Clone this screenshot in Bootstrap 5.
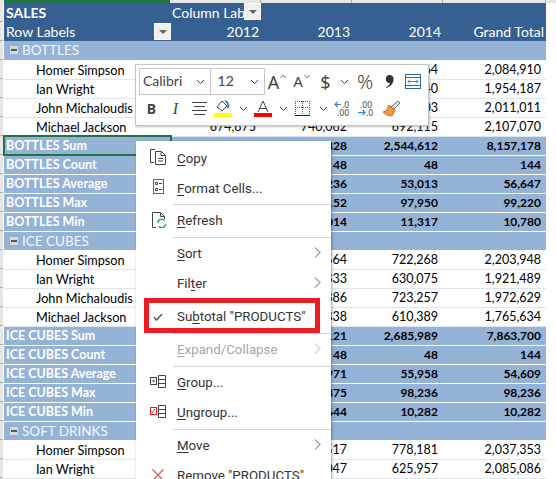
<!DOCTYPE html>
<html lang="en">
<head>
<meta charset="UTF-8">
<title>Pivot table context menu</title>
<link rel="stylesheet" href="https://cdn.jsdelivr.net/npm/bootstrap@5.3.2/dist/css/bootstrap.min.css">
<style>
body { width: 556px; height: 479px; overflow: hidden; background: #fff; font-family: Lato, "Liberation Sans", sans-serif; }
.sheet { position: relative; width: 556px; height: 479px; overflow: hidden; padding-left: 4px;
  background: repeating-linear-gradient(#ababab 0 1px, #e6e6e6 1px 19px) 0 2px / 3px 100% no-repeat; }
.top-strip { height: 3px; margin-left: -4px; background: #e6e6e6; display: flex; }
.top-strip i { display: block; height: 3px; border-right: 1px solid #ababab; }
.top-strip .gut { width: 4px; border: 0; }
.top-strip .col-a { width: 166px; background: #217346; border: 0; }
.top-strip .col-n { width: 91px; }
.top-strip .col-g { width: 103px; }
.pivot { width: 542px; table-layout: fixed; border-collapse: collapse; font-size: 13px; color: #000; }
.pivot col.a { width: 166px; }
.pivot col.n { width: 91px; }
.pivot td { height: 19px; padding: 0 5px 0 2px; line-height: 18px; text-align: right; white-space: nowrap; overflow: hidden; border-bottom: 1px solid #dce6f1; font-size: 12.5px; }
.pivot td:first-child { text-align: left; font-size: 12.7px; }
.hd td, .pivot .hd td:first-child { background: #366092; color: #fff; border: 0; font-size: 14px; padding-right: 2px; }
.hd td.lbl { text-align: left; }
.group td, .pivot .group td:first-child { background: #95b3d7; color: #f4f7fb; border-bottom: 1px solid #fff; font-size: 13.5px; }
.group td:first-child { padding-left: 6px; }
.box { display: inline-block; width: 8px; height: 8px; margin-right: 4px; background: #d9d9d9; position: relative; top: -1px; }
.box::after { content: ""; position: absolute; left: 1px; right: 1px; top: 3px; height: 2px; background: #555; }
.sub td { background: #95b3d7; font-weight: 700; border-bottom: 1px solid #fff; font-size: 12px; }
.pivot .sub td:first-child { color: #fff; font-size: 12.5px; }
.person td:first-child { padding-left: 32px; }
.drop { position: absolute; width: 17px; height: 17px; background: #f0f0f0; border: 1px solid #fff; }
.drop::after { content: ""; position: absolute; left: 4px; top: 6px; border: 4px solid transparent; border-top: 4px solid #666; }
.drop-col { left: 244px; top: 3px; }
.drop-row { left: 154px; top: 23px; }
.cell-frame { position: absolute; left: 3px; top: 135px; width: 169px; height: 21px; border: 2px solid #217346; }

.mini-bar { position: absolute; left: 135px; top: 64px; width: 294px; height: 62px; background: #fff; border: 1px solid #c6c6c6; box-shadow: 1px 1px 2px rgba(0,0,0,.25); padding: 3px; font-family: "Noto Sans", sans-serif; color: #444; }
.bar-line { height: 27px; }
.bar-line + .bar-line { margin-top: 1px; height: 25px; }
.combo { height: 27px; border: 1px solid #c6c6c6; padding-left: 3px; font-family: Lato, sans-serif; font-size: 14px; line-height: 24px; position: relative; color: #444; }
.combo-font { width: 72px; }
.combo-size { width: 55px; margin-left: -1px; }
.chev { position: absolute; right: 5px; top: 10px; }
.tb { display: flex; justify-content: center; align-items: center; flex: none; height: 25px; line-height: 1; }
.s15 { width: 15px; } .s16 { width: 16px; } .s18 { width: 18px; } .s22 { width: 22px; } .s23 { width: 23px; }
.s24 { width: 24px; } .s25 { width: 25px; } .s26 { width: 26px; }
.a-big { font-size: 18px; }
.a-small { font-size: 15px; }
.a-caret { margin: -10px 0 0 1px; }
.dollar { font-size: 18px; }
.pct { font-size: 20px; font-weight: 300; }
.bold-b { font-size: 14px; font-weight: 700; }
.ital-i { font-size: 16px; font-style: italic; font-family: "Liberation Serif", serif; }
svg text { font-family: "Noto Sans", sans-serif; font-size: 8.5px; fill: #444; }

.ctx-menu { position: absolute; left: 136px; top: 141px; width: 195px; height: 345px; background: #fff; box-shadow: 1px 1px 3px rgba(0,0,0,.35); font-family: Roboto, sans-serif; font-size: 13.3px; color: #333; }
.ctx-item { height: 30px; padding-left: 41px; position: relative; line-height: 30px; }
.ctx-item u { text-underline-offset: 2px; }
.ctx-first { height: 33px; line-height: 36px; }
.ctx-format { height: 29px; }
.ctx-after-gap { margin-top: 3px; }
.ic { position: absolute; }
.ic-copy { left: 14px; top: 8px; }
.ic-format { left: 17px; top: 5px; }
.ic-refresh { left: 16px; top: 6px; }
.ic-check { left: 17px; top: 11px; }
.ic-group { left: 14px; top: 7px; }
.ic-remove { left: 16px; top: 8px; }
.arrow { position: absolute; right: 10px; top: 8px; }
.ctx-sep { height: 1px; margin: 1px 0 1px 37px; background: #d4d4d4; }
.off { color: #a6a6a6; }
.red-box { position: absolute; left: 8px; top: 157px; width: 176px; height: 35px; border: 5px solid #ed1c24; }
</style>
</head>
<body>
<div class="sheet">
  <div class="top-strip"><i class="gut"></i><i class="col-a"></i><i class="col-n"></i><i class="col-n"></i><i class="col-n"></i><i class="col-g"></i></div>
  <table class="pivot">
    <colgroup><col class="a"><col class="n"><col class="n"><col class="n"><col></colgroup>
    <tbody id="rows"></tbody>
  </table>
  <span class="drop drop-col"></span>
  <span class="drop drop-row"></span>
  <div class="cell-frame"></div>

  <div class="mini-bar">
    <div class="bar-line d-flex align-items-center">
      <div class="combo combo-font">Calibri<svg class="chev" width="9" height="6" viewBox="0 0 9 6"><path d="M1 1l3.500 3.500L8 1" fill="none" stroke="#444"/></svg></div>
      <div class="combo combo-size">&nbsp;12<svg class="chev" width="9" height="6" viewBox="0 0 9 6"><path d="M1 1l3.500 3.500L8 1" fill="none" stroke="#444"/></svg></div>
      <span class="tb s24"><span class="a-big">A</span><svg class="a-caret" width="6" height="5" viewBox="0 0 6 5"><path d="M.5 4L3 1l2.500 3" fill="none" stroke="#2b88d8"/></svg></span>
      <span class="tb s25"><span class="a-small">A</span><svg class="a-caret" width="6" height="5" viewBox="0 0 6 5"><path d="M.5 1L3 4l2.500-3" fill="none" stroke="#2b88d8"/></svg></span>
      <span class="tb s23 dollar">$</span>
      <span class="tb s15"><svg width="9" height="6" viewBox="0 0 9 6"><path d="M1 1l3.500 3.500L8 1" fill="none" stroke="#444"/></svg></span>
      <span class="tb s26 pct">%</span>
      <span class="tb s22"><svg width="9" height="13" viewBox="0 0 9 13"><path d="M4.500 0a4 4 0 0 1 4 4.500C8.500 8.500 5 12 1.500 13l-.4-.8C3.500 11 5 9.500 5 8a3.500 3.500 0 0 1-1-.1A4 4 0 0 1 4.500 0z" fill="#333"/></svg></span>
      <span class="tb s25"><svg width="16" height="15" viewBox="0 0 16 15"><rect x=".5" y=".5" width="15" height="14" fill="none" stroke="#1f6fa8"/><path d="M.5 3.500h15M.5 11.500h15" stroke="#1f6fa8"/><path d="M3 7.500h10M5 5.500l-2 2 2 2M11 5.500l2 2-2 2" fill="none" stroke="#2b88d8"/></svg></span>
    </div>
    <div class="bar-line d-flex align-items-center">
      <span class="tb s25 bold-b">B</span>
      <span class="tb s23 ital-i">I</span>
      <span class="tb s24"><svg width="15" height="13" viewBox="0 0 15 13"><path d="M0 .5h15M2 4.500h11M0 8.500h15M2 12.500h11" stroke="#444"/></svg></span>
      <span class="tb s24"><svg width="18" height="17" viewBox="0 0 18 17"><path d="M3 7l5-6 5 5-5 5z" fill="none" stroke="#444"/><path d="M11 1c3 1 4 4 3 7" fill="none" stroke="#2b88d8" stroke-width="2"/><rect y="13" width="18" height="4" fill="#ff0"/></svg></span>
      <span class="tb s16"><svg width="9" height="6" viewBox="0 0 9 6"><path d="M1 1l3.500 3.500L8 1" fill="none" stroke="#444"/></svg></span>
      <span class="tb s24"><svg width="18" height="17" viewBox="0 0 18 17"><path d="M4 12L9 1l5 11M5.500 8.500h7" fill="none" stroke="#444"/><rect y="13" width="18" height="4" fill="#f00"/></svg></span>
      <span class="tb s16"><svg width="9" height="6" viewBox="0 0 9 6"><path d="M1 1l3.500 3.500L8 1" fill="none" stroke="#444"/></svg></span>
      <span class="tb s23"><svg width="15" height="15" viewBox="0 0 15 15"><path d="M.5 0v13M14.500 0v13M0 .5h15M0 6.500h15M7.500 0v13" stroke="#555" stroke-dasharray="1 1"/><path d="M0 14.500h15" stroke="#222"/></svg></span>
      <span class="tb s18"><svg width="9" height="6" viewBox="0 0 9 6"><path d="M1 1l3.500 3.500L8 1" fill="none" stroke="#444"/></svg></span>
      <span class="tb s22"><svg width="18" height="18" viewBox="0 0 18 18"><path d="M7 4.500H1M3.500 2L1 4.500 3.500 7" fill="none" stroke="#2b88d8" stroke-width="1.200"/><text x="8" y="8">.0</text><text x="3" y="16">.00</text></svg></span>
      <span class="tb s24"><svg width="18" height="18" viewBox="0 0 18 18"><text x="3" y="8">.00</text><path d="M1 12.500h7M5.500 10L8 12.500 5.500 15" fill="none" stroke="#2b88d8" stroke-width="1.200"/><text x="9" y="16">.0</text></svg></span>
      <span class="tb s26"><svg width="17" height="17" viewBox="0 0 17 17"><path d="M6 5l6 5-3 6-5-1-4-3 3-1z" fill="#ed9a3c" stroke="#c8701e"/><path d="M8 7l7-6 2 2-6 6z" fill="#e8e8e8" stroke="#666"/></svg></span>
    </div>
  </div>

  <div class="ctx-menu">
    <div class="ctx-item ctx-first"><svg class="ic ic-copy" width="16" height="16" viewBox="0 0 16 16"><path d="M5 .5H.5v13H4M5.500 2.500h6l4 4v9h-10zM11 2.500v4h4.500M8 9.500h5M8 12h5" fill="none" stroke="#444"/></svg><u>C</u>opy</div>
    <div class="ctx-item ctx-format"><svg class="ic ic-format" width="11" height="15" viewBox="0 0 11 15"><rect x=".5" y=".5" width="10" height="14" fill="none" stroke="#666"/><path d="M2.500 3.500h2v2h-2zM2.500 9.500h2v2h-2zM6 4.500h3M6 10.500h3" fill="none" stroke="#444"/></svg><u>F</u>ormat Cells...</div>
    <div class="ctx-sep"></div>
    <div class="ctx-item"><svg class="ic ic-refresh" width="15" height="16" viewBox="0 0 15 16"><path d="M4 .5H.5v15H4M4 .5h4.500l4 4V7M8.500 .5v4h4" fill="none" stroke="#444"/><path d="M6 11a3.500 3.500 0 0 1 6.500-2M13.500 12A3.500 3.500 0 0 1 7 14" fill="none" stroke="#3fa652" stroke-width="1.500"/></svg><u>R</u>efresh</div>
    <div class="ctx-sep"></div>
    <div class="ctx-item"><u>S</u>ort<svg class="arrow" width="7" height="11" viewBox="0 0 7 11"><path d="M1 .5l5 5-5 5" fill="none" stroke="#555"/></svg></div>
    <div class="ctx-item">Fil<u>t</u>er<svg class="arrow" width="7" height="11" viewBox="0 0 7 11"><path d="M1 .5l5 5-5 5" fill="none" stroke="#555"/></svg></div>
    <div class="ctx-item ctx-after-gap"><svg class="ic ic-check" width="10" height="8" viewBox="0 0 10 8"><path d="M1 4l2.500 3L9 1" fill="none" stroke="#555" stroke-width="1.500"/></svg>Su<u>b</u>total "PRODUCTS"</div>
    <div class="ctx-sep"></div>
    <div class="ctx-item off"><u>E</u>xpand/Collapse<svg class="arrow" width="7" height="11" viewBox="0 0 7 11"><path d="M1 .5l5 5-5 5" fill="none" stroke="#aaa"/></svg></div>
    <div class="ctx-sep"></div>
    <div class="ctx-item"><svg class="ic ic-group" width="16" height="13" viewBox="0 0 16 13"><rect x=".5" y="2.500" width="6" height="7" fill="none" stroke="#444"/><path d="M2 6h3M3.500 4.500v3" stroke="#2b88d8"/><path d="M8.500 .5h7v12h-7zM8.500 4.500h7M8.500 8.500h7" fill="none" stroke="#444"/></svg><u>G</u>roup...</div>
    <div class="ctx-item"><svg class="ic ic-group" width="16" height="13" viewBox="0 0 16 13"><rect x=".5" y="2.500" width="6" height="7" fill="none" stroke="#ed1c24"/><path d="M2 8l3-4" stroke="#ed1c24"/><path d="M8.500 .5h7v12h-7zM8.500 4.500h7M8.500 8.500h7" fill="none" stroke="#444"/></svg><u>U</u>ngroup...</div>
    <div class="ctx-sep"></div>
    <div class="ctx-item"><u>M</u>ove<svg class="arrow" width="7" height="11" viewBox="0 0 7 11"><path d="M1 .5l5 5-5 5" fill="none" stroke="#555"/></svg></div>
    <div class="ctx-item"><svg class="ic ic-remove" width="12" height="12" viewBox="0 0 12 12"><path d="M.5.500l11 11M11.500.500l-11 11" stroke="#e0524d" stroke-width="1.200"/></svg>Remove "PRODUCTS"</div>
    <div class="red-box"></div>
  </div>
</div>

<script>
var rows = [
  ["hd", "<b>SALES</b>", "Column Labels", "", "", ""],
  ["hd", "Row Labels", "2012", "2013", "2014", "Grand Total"],
  ["group", "BOTTLES"],
  ["person", "Homer Simpson", "712,330", "740,916", "631,664", "2,084,910"],
  ["person", "Ian Wright", "650,411", "662,236", "641,540", "1,954,187"],
  ["person", "John Michaloudis", "684,118", "647,790", "679,103", "2,011,011"],
  ["person", "Michael Jackson", "674,875", "740,082", "692,115", "2,107,070"],
  ["sub", "BOTTLES Sum", "2,721,738", "2,890,828", "2,544,612", "8,157,178"],
  ["sub", "BOTTLES Count", "48", "48", "48", "144"],
  ["sub", "BOTTLES Average", "56,703", "60,236", "53,013", "56,647"],
  ["sub", "BOTTLES Max", "99,220", "98,152", "97,950", "99,220"],
  ["sub", "BOTTLES Min", "10,780", "12,014", "11,317", "10,780"],
  ["group", "ICE CUBES"],
  ["person", "Homer Simpson", "740,116", "741,564", "722,268", "2,203,948"],
  ["person", "Ian Wright", "645,081", "646,333", "630,075", "1,921,489"],
  ["person", "John Michaloudis", "623,986", "625,386", "723,257", "1,972,629"],
  ["person", "Michael Jackson", "577,407", "577,838", "610,389", "1,765,634"],
  ["sub", "ICE CUBES Sum", "2,586,590", "2,591,121", "2,685,989", "7,863,700"],
  ["sub", "ICE CUBES Count", "48", "48", "48", "144"],
  ["sub", "ICE CUBES Average", "53,887", "53,971", "55,958", "54,609"],
  ["sub", "ICE CUBES Max", "97,310", "97,875", "98,236", "98,236"],
  ["sub", "ICE CUBES Min", "10,544", "10,644", "10,282", "10,282"],
  ["group", "SOFT DRINKS"],
  ["person", "Homer Simpson", "636,655", "622,517", "778,181", "2,037,353"],
  ["person", "Ian Wright", "730,082", "729,047", "625,957", "2,085,086"]
];

var html = "";
rows.forEach(function(r, i) {
  var cells = r.slice(1);
  if (r[0] == "group") {
    html += '<tr class="group"><td><span class="box"></span>' + cells[0] + '</td><td></td><td></td><td></td><td></td></tr>';
  } else if (i == 0) {
    html += '<tr class="hd"><td>' + cells[0] + '</td><td class="lbl">' + cells[1] + '</td><td></td><td></td><td></td></tr>';
  } else {
    html += '<tr class="' + r[0] + '"><td>' + cells.join("</td><td>") + "</td></tr>";
  }
});
document.getElementById("rows").innerHTML = html;
</script>
<script src="https://cdn.jsdelivr.net/npm/bootstrap@5.3.2/dist/js/bootstrap.bundle.min.js"></script>
</body>
</html>
